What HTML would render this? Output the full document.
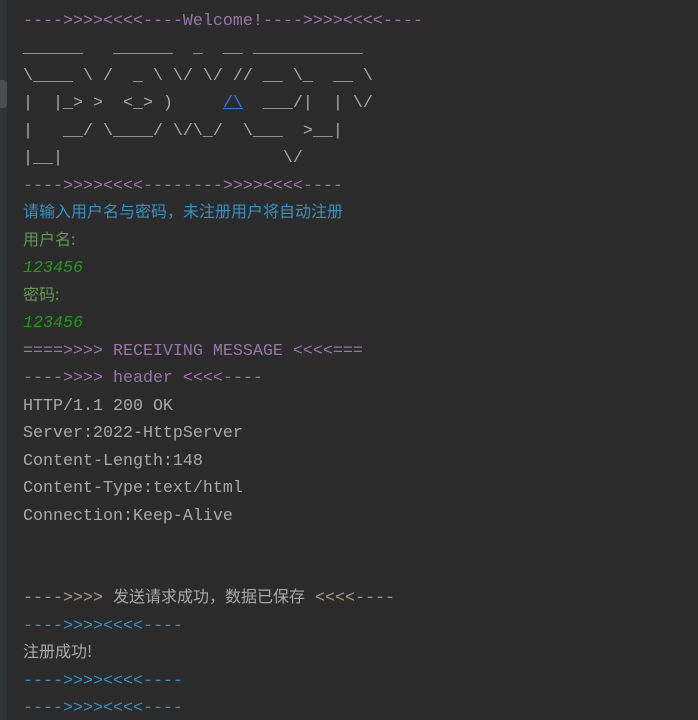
<!DOCTYPE html>
<html><head><meta charset="utf-8"><style>
html,body{margin:0;padding:0;background:#2b2b2b;width:698px;height:720px;overflow:hidden}
.g{position:absolute;left:0;top:0;width:7px;height:720px;background:#313335}
.gb{position:absolute;left:0;top:80px;width:7px;height:28px;background:#4a4d50;border-radius:0 4px 4px 0}
.l{position:absolute;left:23px;height:20px;white-space:pre;font-family:"Liberation Mono","Noto Sans CJK SC",monospace;font-size:16.67px;line-height:20px;color:#a9b7c6}
.c{display:inline-block;vertical-align:top;position:relative;top:-4px;height:20px;font-family:"Noto Sans CJK SC","WenQuanYi Zen Hei",sans-serif;font-size:16px;line-height:20px}
.p{color:#9876aa}.b{color:#3592c4}.gr{color:#629755}.gi{color:#1f9a1f;font-style:italic}.o{color:#a89a85}
.t{color:#a9a9a9}
</style></head><body>
<div class="g"></div><div class="gb"></div>
<div class="l p" style="top:12px">----&gt;&gt;&gt;&gt;&lt;&lt;&lt;&lt;----Welcome!----&gt;&gt;&gt;&gt;&lt;&lt;&lt;&lt;----</div>
<div class="l t" style="top:39px">______   ______  _  __ ___________</div>
<div class="l t" style="top:67px">\____ \ /  _ \ \/ \/ // __ \_  __ \</div>
<div class="l t" style="top:94px">|  |_&gt; &gt;  &lt;_&gt; )     <span style="color:#287bde;text-decoration:underline">/\</span>  ___/|  | \/</div>
<div class="l t" style="top:122px">|   __/ \____/ \/\_/  \___  &gt;__|</div>
<div class="l t" style="top:149px">|__|                      \/</div>
<div class="l p" style="top:177px">----&gt;&gt;&gt;&gt;&lt;&lt;&lt;&lt;--------&gt;&gt;&gt;&gt;&lt;&lt;&lt;&lt;----</div>
<div class="l b" style="top:204px"><span class="c">请输入用户名与密码，未注册用户将自动注册</span></div>
<div class="l gr" style="top:232px"><span class="c">用户名:</span></div>
<div class="l gi" style="top:259px">123456</div>
<div class="l gr" style="top:287px"><span class="c">密码:</span></div>
<div class="l gi" style="top:314px">123456</div>
<div class="l p" style="top:342px">====&gt;&gt;&gt;&gt; RECEIVING MESSAGE &lt;&lt;&lt;&lt;===</div>
<div class="l p" style="top:369px">----&gt;&gt;&gt;&gt; header &lt;&lt;&lt;&lt;----</div>
<div class="l t" style="top:397px">HTTP/1.1 200 OK</div>
<div class="l t" style="top:424px">Server:2022-HttpServer</div>
<div class="l t" style="top:452px">Content-Length:148</div>
<div class="l t" style="top:479px">Content-Type:text/html</div>
<div class="l t" style="top:507px">Connection:Keep-Alive</div>
<div class="l t" style="top:589px"><span class="o">----&gt;&gt;&gt;&gt;</span> <span class="c">发送请求成功，数据已保存</span> <span class="o">&lt;&lt;&lt;&lt;----</span></div>
<div class="l b" style="top:617px">----&gt;&gt;&gt;&gt;&lt;&lt;&lt;&lt;----</div>
<div class="l t" style="top:644px"><span class="c">注册成功!</span></div>
<div class="l b" style="top:672px">----&gt;&gt;&gt;&gt;&lt;&lt;&lt;&lt;----</div>
<div class="l b" style="top:699px">----&gt;&gt;&gt;&gt;&lt;&lt;&lt;&lt;----</div>
</body></html>
